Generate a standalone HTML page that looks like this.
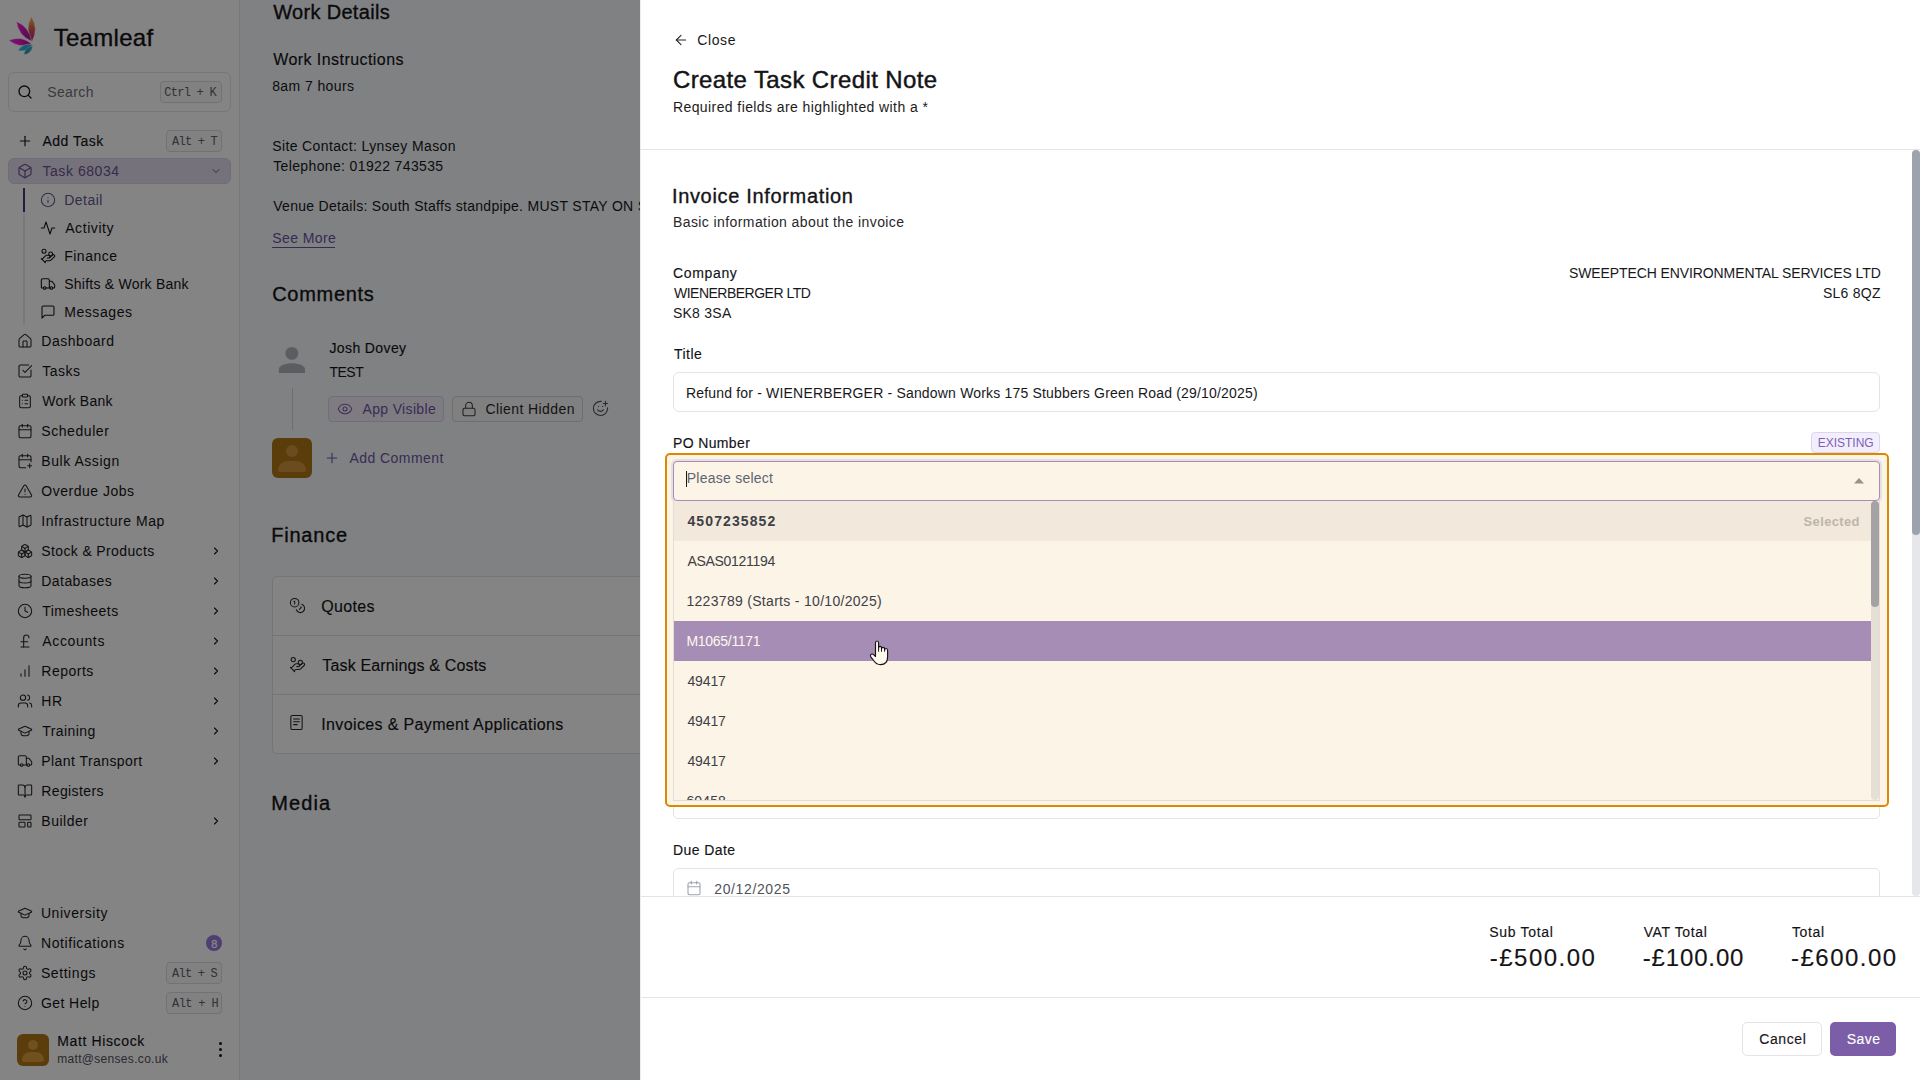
<!DOCTYPE html>
<html><head><meta charset="utf-8"><title>Create Task Credit Note</title>
<style>
html,body{margin:0;padding:0;width:1920px;height:1080px;overflow:hidden;background:#fff}
body{position:relative;font-family:"Liberation Sans", sans-serif;}
.abs{position:absolute;box-sizing:content-box}
.ic{position:absolute;overflow:visible}
.t{position:absolute;white-space:nowrap;}
</style></head><body>
<div class="abs" style="left:0;top:0;width:239px;height:1080px;background:#ffffff"></div><div class="abs" style="left:239px;top:0;width:1px;height:1080px;background:#e8e9ec"></div><div class="abs" style="left:240px;top:0;width:1680px;height:1080px;background:#f7f9fc"></div><svg class="abs" style="left:7px;top:14px;width:32px;height:44px" viewBox="0 0 32 44">
<defs>
<linearGradient id="g1" x1="0" y1="0" x2="0" y2="1"><stop offset="0" stop-color="#ffc44a"/><stop offset="0.45" stop-color="#e0604a"/><stop offset="1" stop-color="#b0247a"/></linearGradient>
<linearGradient id="g2" x1="0" y1="0" x2="1" y2="1"><stop offset="0" stop-color="#ff1ad8"/><stop offset="1" stop-color="#9a1890"/></linearGradient>
<linearGradient id="g3" x1="0" y1="0" x2="1" y2="0"><stop offset="0" stop-color="#ff22f0"/><stop offset="1" stop-color="#c0089a"/></linearGradient>
<linearGradient id="g4" x1="0" y1="0" x2="1" y2="0"><stop offset="0" stop-color="#22c8f0"/><stop offset="1" stop-color="#3a90d0"/></linearGradient>
<linearGradient id="g5" x1="0" y1="1" x2="1" y2="0"><stop offset="0" stop-color="#1a9a90"/><stop offset="1" stop-color="#40b0d8"/></linearGradient>
</defs>
<path d="M24.4 2.4 Q17.50 15.12 25 27.5 Q31.90 14.78 24.4 2.4Z" stroke="#ffffff" stroke-width="0.45" fill="url(#g1)"/>
<path d="M9.4 7.4 Q11.50 21.62 24.7 27.3 Q22.60 13.08 9.4 7.4Z" stroke="#ffffff" stroke-width="0.45" fill="url(#g2)"/>
<path d="M1.9 26.3 Q12.11 34.68 24.3 29.6 Q14.09 21.22 1.9 26.3Z" stroke="#ffffff" stroke-width="0.45" fill="url(#g3)"/>
<path d="M10.8 36.6 Q20.19 38.60 25.5 30.6 Q16.11 28.60 10.8 36.6Z" stroke="#ffffff" stroke-width="0.45" fill="url(#g4)"/>
<path d="M16.9 40.7 Q24.89 39.79 25.8 31.8 Q17.81 32.71 16.9 40.7Z" stroke="#ffffff" stroke-width="0.45" fill="url(#g5)"/>
</svg><div class="abs" style="left:8px;top:72px;width:221px;height:38px;border:1px solid #e4e4e7;border-radius:6px;background:#fff"></div><svg class="ic" style="left:17px;top:84px;width:16px;height:16px" viewBox="0 0 24 24" fill="none" stroke="#18181b" stroke-width="2" stroke-linecap="round" stroke-linejoin="round"><circle cx="11" cy="11" r="8"/><path d="m21 21-4.3-4.3"/></svg><div class="abs" style="left:160px;top:81px;width:60px;height:20px;border:1px solid #dcdce0;border-radius:4px;background:#fafafa"></div><svg class="ic" style="left:17px;top:133px;width:16px;height:16px" viewBox="0 0 24 24" fill="none" stroke="#18181b" stroke-width="1.8" stroke-linecap="round" stroke-linejoin="round"><path d="M5 12h14"/><path d="M12 5v14"/></svg><div class="abs" style="left:166px;top:130px;width:54px;height:20px;border:1px solid #dcdce0;border-radius:4px;background:#fafafa"></div><div class="abs" style="left:8px;top:158px;width:221px;height:24px;border:1px solid #d8d0ea;border-radius:6px;background:#e2dcef"></div><svg class="ic" style="left:17px;top:163px;width:16px;height:16px" viewBox="0 0 24 24" fill="none" stroke="#6a5690" stroke-width="1.8" stroke-linecap="round" stroke-linejoin="round"><path d="M21 8a2 2 0 0 0-1-1.73l-7-4a2 2 0 0 0-2 0l-7 4A2 2 0 0 0 3 8v8a2 2 0 0 0 1 1.73l7 4a2 2 0 0 0 2 0l7-4A2 2 0 0 0 21 16Z"/><path d="m3.3 7 8.7 5 8.7-5"/><path d="M12 22V12"/></svg><svg class="ic" style="left:210px;top:165px;width:12px;height:12px" viewBox="0 0 24 24" fill="none" stroke="#6a5690" stroke-width="2" stroke-linecap="round" stroke-linejoin="round"><path d="m6 9 6 6 6-6"/></svg><div class="abs" style="left:23px;top:188px;width:2px;height:136px;background:#e9e9ed"></div><div class="abs" style="left:23px;top:188px;width:2px;height:24px;background:#4a3878"></div><svg class="ic" style="left:40px;top:192px;width:16px;height:16px" viewBox="0 0 24 24" fill="none" stroke="#6a5690" stroke-width="1.6" stroke-linecap="round" stroke-linejoin="round"><circle cx="12" cy="12" r="10"/><path d="M12 16v-4"/><path d="M12 8h.01"/></svg><svg class="ic" style="left:40px;top:220px;width:16px;height:16px" viewBox="0 0 24 24" fill="none" stroke="#141417" stroke-width="1.6" stroke-linecap="round" stroke-linejoin="round"><path d="M22 12h-4l-3 9L9 3l-3 9H2"/></svg><svg class="ic" style="left:40px;top:248px;width:16px;height:16px" viewBox="0 0 24 24" fill="none" stroke="#141417" stroke-width="1.6" stroke-linecap="round" stroke-linejoin="round"><path d="M11 15h2a2 2 0 1 0 0-4h-3c-.6 0-1.1.2-1.4.6L3 17"/><path d="m7 21 1.6-1.4c.3-.4.8-.6 1.4-.6h4c1.1 0 2.1-.4 2.8-1.2l4.6-4.4a2 2 0 0 0-2.75-2.91l-4.2 3.9"/><path d="m2 16 6 6"/><circle cx="16" cy="9" r="2.9"/><circle cx="6" cy="5" r="3"/></svg><svg class="ic" style="left:40px;top:276px;width:16px;height:16px" viewBox="0 0 24 24" fill="none" stroke="#141417" stroke-width="1.6" stroke-linecap="round" stroke-linejoin="round"><path d="M14 18V6a2 2 0 0 0-2-2H4a2 2 0 0 0-2 2v11a1 1 0 0 0 1 1h2"/><path d="M15 18H9"/><path d="M19 18h2a1 1 0 0 0 1-1v-3.65a1 1 0 0 0-.22-.624l-3.48-4.35A1 1 0 0 0 17.52 8H14"/><circle cx="17" cy="18" r="2"/><circle cx="7" cy="18" r="2"/></svg><svg class="ic" style="left:40px;top:304px;width:16px;height:16px" viewBox="0 0 24 24" fill="none" stroke="#141417" stroke-width="1.6" stroke-linecap="round" stroke-linejoin="round"><path d="M21 15a2 2 0 0 1-2 2H7l-4 4V5a2 2 0 0 1 2-2h14a2 2 0 0 1 2 2z"/></svg><svg class="ic" style="left:17px;top:333px;width:16px;height:16px" viewBox="0 0 24 24" fill="none" stroke="#27272a" stroke-width="1.6" stroke-linecap="round" stroke-linejoin="round"><path d="M15 21v-8a1 1 0 0 0-1-1h-4a1 1 0 0 0-1 1v8"/><path d="M3 10a2 2 0 0 1 .709-1.528l7-5.999a2 2 0 0 1 2.582 0l7 5.999A2 2 0 0 1 21 10v9a2 2 0 0 1-2 2H5a2 2 0 0 1-2-2z"/></svg><svg class="ic" style="left:17px;top:363px;width:16px;height:16px" viewBox="0 0 24 24" fill="none" stroke="#27272a" stroke-width="1.6" stroke-linecap="round" stroke-linejoin="round"><path d="M21 10.5V19a2 2 0 0 1-2 2H5a2 2 0 0 1-2-2V5a2 2 0 0 1 2-2h12.5"/><path d="m9 11 3 3L22 4"/></svg><svg class="ic" style="left:17px;top:393px;width:16px;height:16px" viewBox="0 0 24 24" fill="none" stroke="#27272a" stroke-width="1.6" stroke-linecap="round" stroke-linejoin="round"><rect width="8" height="4" x="8" y="2" rx="1" ry="1"/><path d="M16 4h2a2 2 0 0 1 2 2v14a2 2 0 0 1-2 2H6a2 2 0 0 1-2-2V6a2 2 0 0 1 2-2h2"/><path d="M12 11h4"/><path d="M12 16h4"/><path d="M8 11h.01"/><path d="M8 16h.01"/></svg><svg class="ic" style="left:17px;top:423px;width:16px;height:16px" viewBox="0 0 24 24" fill="none" stroke="#27272a" stroke-width="1.6" stroke-linecap="round" stroke-linejoin="round"><path d="M8 2v4"/><path d="M16 2v4"/><rect width="18" height="18" x="3" y="4" rx="2"/><path d="M3 10h18"/></svg><svg class="ic" style="left:17px;top:453px;width:16px;height:16px" viewBox="0 0 24 24" fill="none" stroke="#27272a" stroke-width="1.6" stroke-linecap="round" stroke-linejoin="round"><path d="M8 2v4"/><path d="M16 2v4"/><path d="M21 13V6a2 2 0 0 0-2-2H5a2 2 0 0 0-2 2v14a2 2 0 0 0 2 2h8"/><path d="M3 10h18"/><path d="M16 19h6"/><path d="M19 16v6"/></svg><svg class="ic" style="left:17px;top:483px;width:16px;height:16px" viewBox="0 0 24 24" fill="none" stroke="#27272a" stroke-width="1.6" stroke-linecap="round" stroke-linejoin="round"><path d="m21.73 18-8-14a2 2 0 0 0-3.48 0l-8 14A2 2 0 0 0 4 21h16a2 2 0 0 0 1.73-3"/><path d="M12 9v4"/><path d="M12 17h.01"/></svg><svg class="ic" style="left:17px;top:513px;width:16px;height:16px" viewBox="0 0 24 24" fill="none" stroke="#27272a" stroke-width="1.6" stroke-linecap="round" stroke-linejoin="round"><path d="M14.106 5.553a2 2 0 0 0 1.788 0l3.659-1.83A1 1 0 0 1 21 4.619v12.764a1 1 0 0 1-.553.894l-4.553 2.277a2 2 0 0 1-1.788 0l-4.212-2.106a2 2 0 0 0-1.788 0l-3.659 1.83A1 1 0 0 1 3 19.381V6.618a1 1 0 0 1 .553-.894l4.553-2.277a2 2 0 0 1 1.788 0z"/><path d="M15 5.764v15"/><path d="M9 3.236v15"/></svg><svg class="ic" style="left:17px;top:543px;width:16px;height:16px" viewBox="0 0 24 24" fill="none" stroke="#27272a" stroke-width="1.6" stroke-linecap="round" stroke-linejoin="round"><path d="M2.97 12.92A2 2 0 0 0 2 14.63v3.24a2 2 0 0 0 .97 1.71l3 1.8a2 2 0 0 0 2.06 0L12 19v-5.5l-5-3-4.03 2.42Z"/><path d="m7 16.5-4.74-2.85"/><path d="m7 16.5 5-3"/><path d="M7 16.5v5.17"/><path d="M12 13.5V19l3.97 2.38a2 2 0 0 0 2.06 0l3-1.8a2 2 0 0 0 .97-1.71v-3.24a2 2 0 0 0-.97-1.71L17 10.5l-5 3Z"/><path d="m17 16.5-5-3"/><path d="m17 16.5 4.74-2.85"/><path d="M17 16.5v5.17"/><path d="M7.97 4.42A2 2 0 0 0 7 6.13v4.37l5 3 5-3V6.13a2 2 0 0 0-.97-1.71l-3-1.8a2 2 0 0 0-2.06 0l-3 1.8Z"/><path d="M12 8 7.26 5.15"/><path d="m12 8 4.74-2.85"/><path d="M12 13.5V8"/></svg><svg class="ic" style="left:210px;top:545px;width:12px;height:12px" viewBox="0 0 24 24" fill="none" stroke="#18181b" stroke-width="2.3" stroke-linecap="round" stroke-linejoin="round"><path d="m9 18 6-6-6-6"/></svg><svg class="ic" style="left:17px;top:573px;width:16px;height:16px" viewBox="0 0 24 24" fill="none" stroke="#27272a" stroke-width="1.6" stroke-linecap="round" stroke-linejoin="round"><ellipse cx="12" cy="5" rx="9" ry="3"/><path d="M3 5V19A9 3 0 0 0 21 19V5"/><path d="M3 12A9 3 0 0 0 21 12"/></svg><svg class="ic" style="left:210px;top:575px;width:12px;height:12px" viewBox="0 0 24 24" fill="none" stroke="#18181b" stroke-width="2.3" stroke-linecap="round" stroke-linejoin="round"><path d="m9 18 6-6-6-6"/></svg><svg class="ic" style="left:17px;top:603px;width:16px;height:16px" viewBox="0 0 24 24" fill="none" stroke="#27272a" stroke-width="1.6" stroke-linecap="round" stroke-linejoin="round"><circle cx="12" cy="12" r="10"/><polyline points="12 6 12 12 16 14"/></svg><svg class="ic" style="left:210px;top:605px;width:12px;height:12px" viewBox="0 0 24 24" fill="none" stroke="#18181b" stroke-width="2.3" stroke-linecap="round" stroke-linejoin="round"><path d="m9 18 6-6-6-6"/></svg><svg class="ic" style="left:17px;top:633px;width:16px;height:16px" viewBox="0 0 24 24" fill="none" stroke="#27272a" stroke-width="1.6" stroke-linecap="round" stroke-linejoin="round"><path d="M18 7c0-5.333-8-5.333-8 0"/><path d="M10 7v14"/><path d="M6 21h12"/><path d="M6 13h10"/></svg><svg class="ic" style="left:210px;top:635px;width:12px;height:12px" viewBox="0 0 24 24" fill="none" stroke="#18181b" stroke-width="2.3" stroke-linecap="round" stroke-linejoin="round"><path d="m9 18 6-6-6-6"/></svg><svg class="ic" style="left:17px;top:663px;width:16px;height:16px" viewBox="0 0 24 24" fill="none" stroke="#27272a" stroke-width="1.6" stroke-linecap="round" stroke-linejoin="round"><path d="M12 20V10"/><path d="M18 20V4"/><path d="M6 20v-4"/></svg><svg class="ic" style="left:210px;top:665px;width:12px;height:12px" viewBox="0 0 24 24" fill="none" stroke="#18181b" stroke-width="2.3" stroke-linecap="round" stroke-linejoin="round"><path d="m9 18 6-6-6-6"/></svg><svg class="ic" style="left:17px;top:693px;width:16px;height:16px" viewBox="0 0 24 24" fill="none" stroke="#27272a" stroke-width="1.6" stroke-linecap="round" stroke-linejoin="round"><path d="M16 21v-2a4 4 0 0 0-4-4H6a4 4 0 0 0-4 4v2"/><circle cx="9" cy="7" r="4"/><path d="M22 21v-2a4 4 0 0 0-3-3.87"/><path d="M16 3.13a4 4 0 0 1 0 7.75"/></svg><svg class="ic" style="left:210px;top:695px;width:12px;height:12px" viewBox="0 0 24 24" fill="none" stroke="#18181b" stroke-width="2.3" stroke-linecap="round" stroke-linejoin="round"><path d="m9 18 6-6-6-6"/></svg><svg class="ic" style="left:17px;top:723px;width:16px;height:16px" viewBox="0 0 24 24" fill="none" stroke="#27272a" stroke-width="1.6" stroke-linecap="round" stroke-linejoin="round"><path d="M21.42 10.922a1 1 0 0 0-.019-1.838L12.83 5.18a2 2 0 0 0-1.66 0L2.6 9.08a1 1 0 0 0 0 1.832l8.57 3.908a2 2 0 0 0 1.66 0z"/><path d="M6 12.5V16a6 3 0 0 0 12 0v-3.5"/></svg><svg class="ic" style="left:210px;top:725px;width:12px;height:12px" viewBox="0 0 24 24" fill="none" stroke="#18181b" stroke-width="2.3" stroke-linecap="round" stroke-linejoin="round"><path d="m9 18 6-6-6-6"/></svg><svg class="ic" style="left:17px;top:753px;width:16px;height:16px" viewBox="0 0 24 24" fill="none" stroke="#27272a" stroke-width="1.6" stroke-linecap="round" stroke-linejoin="round"><path d="M14 18V6a2 2 0 0 0-2-2H4a2 2 0 0 0-2 2v11a1 1 0 0 0 1 1h2"/><path d="M15 18H9"/><path d="M19 18h2a1 1 0 0 0 1-1v-3.65a1 1 0 0 0-.22-.624l-3.48-4.35A1 1 0 0 0 17.52 8H14"/><circle cx="17" cy="18" r="2"/><circle cx="7" cy="18" r="2"/></svg><svg class="ic" style="left:210px;top:755px;width:12px;height:12px" viewBox="0 0 24 24" fill="none" stroke="#18181b" stroke-width="2.3" stroke-linecap="round" stroke-linejoin="round"><path d="m9 18 6-6-6-6"/></svg><svg class="ic" style="left:17px;top:783px;width:16px;height:16px" viewBox="0 0 24 24" fill="none" stroke="#27272a" stroke-width="1.6" stroke-linecap="round" stroke-linejoin="round"><path d="M12 7v14"/><path d="M3 18a1 1 0 0 1-1-1V4a1 1 0 0 1 1-1h5a4 4 0 0 1 4 4 4 4 0 0 1 4-4h5a1 1 0 0 1 1 1v13a1 1 0 0 1-1 1h-6a3 3 0 0 0-3 3 3 3 0 0 0-3-3z"/></svg><svg class="ic" style="left:17px;top:813px;width:16px;height:16px" viewBox="0 0 24 24" fill="none" stroke="#27272a" stroke-width="1.6" stroke-linecap="round" stroke-linejoin="round"><rect width="18" height="7" x="3" y="3" rx="1"/><rect width="9" height="7" x="3" y="14" rx="1"/><rect width="5" height="7" x="16" y="14" rx="1"/></svg><svg class="ic" style="left:210px;top:815px;width:12px;height:12px" viewBox="0 0 24 24" fill="none" stroke="#18181b" stroke-width="2.3" stroke-linecap="round" stroke-linejoin="round"><path d="m9 18 6-6-6-6"/></svg><svg class="ic" style="left:17px;top:905px;width:16px;height:16px" viewBox="0 0 24 24" fill="none" stroke="#27272a" stroke-width="1.6" stroke-linecap="round" stroke-linejoin="round"><path d="M21.42 10.922a1 1 0 0 0-.019-1.838L12.83 5.18a2 2 0 0 0-1.66 0L2.6 9.08a1 1 0 0 0 0 1.832l8.57 3.908a2 2 0 0 0 1.66 0z"/><path d="M6 12.5V16a6 3 0 0 0 12 0v-3.5"/></svg><svg class="ic" style="left:17px;top:935px;width:16px;height:16px" viewBox="0 0 24 24" fill="none" stroke="#27272a" stroke-width="1.6" stroke-linecap="round" stroke-linejoin="round"><path d="M10.268 21a2 2 0 0 0 3.464 0"/><path d="M3.262 15.326A1 1 0 0 0 4 17h16a1 1 0 0 0 .74-1.673C19.41 13.956 18 12.499 18 8A6 6 0 0 0 6 8c0 4.499-1.411 5.956-2.738 7.326"/></svg><svg class="ic" style="left:17px;top:965px;width:16px;height:16px" viewBox="0 0 24 24" fill="none" stroke="#27272a" stroke-width="1.6" stroke-linecap="round" stroke-linejoin="round"><path d="M12.22 2h-.44a2 2 0 0 0-2 2v.18a2 2 0 0 1-1 1.73l-.43.25a2 2 0 0 1-2 0l-.15-.08a2 2 0 0 0-2.73.73l-.22.38a2 2 0 0 0 .73 2.73l.15.1a2 2 0 0 1 1 1.72v.51a2 2 0 0 1-1 1.74l-.15.09a2 2 0 0 0-.73 2.73l.22.38a2 2 0 0 0 2.73.73l.15-.08a2 2 0 0 1 2 0l.43.25a2 2 0 0 1 1 1.73V20a2 2 0 0 0 2 2h.44a2 2 0 0 0 2-2v-.18a2 2 0 0 1 1-1.73l.43-.25a2 2 0 0 1 2 0l.15.08a2 2 0 0 0 2.73-.73l.22-.39a2 2 0 0 0-.73-2.73l-.15-.08a2 2 0 0 1-1-1.74v-.5a2 2 0 0 1 1-1.74l.15-.09a2 2 0 0 0 .73-2.73l-.22-.38a2 2 0 0 0-2.73-.73l-.15.08a2 2 0 0 1-2 0l-.43-.25a2 2 0 0 1-1-1.73V4a2 2 0 0 0-2-2z"/><circle cx="12" cy="12" r="3"/></svg><svg class="ic" style="left:17px;top:995px;width:16px;height:16px" viewBox="0 0 24 24" fill="none" stroke="#27272a" stroke-width="1.6" stroke-linecap="round" stroke-linejoin="round"><circle cx="12" cy="12" r="10"/><path d="M9.09 9a3 3 0 0 1 5.83 1c0 2-3 3-3 3"/><path d="M12 17h.01"/></svg><div class="abs" style="left:206px;top:935px;width:16px;height:16px;border-radius:8px;background:#9a78dc"></div><div class="abs" style="left:166px;top:962px;width:54px;height:20px;border:1px solid #dcdce0;border-radius:4px;background:#fafafa"></div><div class="abs" style="left:166px;top:992px;width:54px;height:20px;border:1px solid #dcdce0;border-radius:4px;background:#fafafa"></div><div class="abs" style="left:17px;top:1034px;width:32px;height:32px;border-radius:6px;background:#b07416;overflow:hidden"><div class="abs" style="left:11px;top:6px;width:10px;height:10px;border-radius:5px;background:#d99a3a"></div><div class="abs" style="left:5px;top:18px;width:22px;height:10px;border-radius:11px 11px 3px 3px;background:#d99a3a"></div></div><div class="abs" style="left:219px;top:1042px;width:3px;height:3px;border-radius:2px;background:#18181b"></div><div class="abs" style="left:219px;top:1048px;width:3px;height:3px;border-radius:2px;background:#18181b"></div><div class="abs" style="left:219px;top:1054px;width:3px;height:3px;border-radius:2px;background:#18181b"></div><div class="abs" style="left:272px;top:247px;width:63px;height:1px;background:#6d51a6"></div><svg class="abs" style="left:270px;top:340px;width:40px;height:40px" viewBox="270 340 40 40"><circle cx="291.85" cy="353.35" r="6.45" fill="#b2b4bc"/><path d="M278.9 373 V369.2 C278.9 365.6 285.2 363.3 291.95 363.3 C298.7 363.3 305 365.6 305 369.2 V373 Z" fill="#b2b4bc"/></svg><div class="abs" style="left:292px;top:388px;width:1px;height:42px;background:#d4d4d8"></div><div class="abs" style="left:328px;top:396px;width:114px;height:24px;border:1px solid #ddd3f0;border-radius:4px;background:#f3effa"></div><svg class="ic" style="left:337px;top:401px;width:16px;height:16px" viewBox="0 0 24 24" fill="none" stroke="#7c62b0" stroke-width="1.6" stroke-linecap="round" stroke-linejoin="round"><path d="M2.062 12.348a1 1 0 0 1 0-.696 10.75 10.75 0 0 1 19.876 0 1 1 0 0 1 0 .696 10.75 10.75 0 0 1-19.876 0"/><circle cx="12" cy="12" r="3"/></svg><div class="abs" style="left:452px;top:396px;width:129px;height:24px;border:1px solid #d4d4d8;border-radius:4px;background:#f7f8fa"></div><svg class="ic" style="left:461px;top:401px;width:16px;height:16px" viewBox="0 0 24 24" fill="none" stroke="#3f3f46" stroke-width="1.6" stroke-linecap="round" stroke-linejoin="round"><rect width="18" height="11" x="3" y="11" rx="2" ry="2"/><path d="M7 11V7a5 5 0 0 1 10 0v4"/></svg><svg class="ic" style="left:592px;top:400px;width:17px;height:17px" viewBox="0 0 24 24" fill="none" stroke="#52525b" stroke-width="1.6" stroke-linecap="round" stroke-linejoin="round"><path d="M22 11v1a10 10 0 1 1-9-10"/><path d="M8 14s1.5 2 4 2 4-2 4-2"/><line x1="9" x2="9.01" y1="9" y2="9"/><line x1="15" x2="15.01" y1="9" y2="9"/><path d="M16 5h6"/><path d="M19 2v6"/></svg><div class="abs" style="left:272px;top:438px;width:40px;height:40px;border-radius:6px;background:#b07416;overflow:hidden"><div class="abs" style="left:14px;top:7px;width:12px;height:12px;border-radius:6px;background:#d0943a"></div><div class="abs" style="left:6px;top:23px;width:28px;height:11px;border-radius:14px 14px 3px 3px;background:#d0943a"></div></div><svg class="ic" style="left:324px;top:450px;width:16px;height:16px" viewBox="0 0 24 24" fill="none" stroke="#6f55a6" stroke-width="1.6" stroke-linecap="round" stroke-linejoin="round"><path d="M5 12h14"/><path d="M12 5v14"/></svg><div class="abs" style="left:272px;top:576px;width:500px;height:176px;border:1px solid #e2e3e7;border-radius:5px;background:#ffffff"></div><div class="abs" style="left:273px;top:635px;width:500px;height:1px;background:#e2e3e7"></div><div class="abs" style="left:273px;top:694px;width:500px;height:1px;background:#e2e3e7"></div><svg class="ic" style="left:288.5px;top:596.5px;width:17px;height:17px" viewBox="0 0 24 24" fill="none" stroke="#27272a" stroke-width="1.5" stroke-linecap="round" stroke-linejoin="round"><circle cx="8" cy="8" r="6"/><path d="M18.09 10.37A6 6 0 1 1 10.34 18"/><path d="M7 6h1v4"/><path d="m16.71 13.88.7.71-2.82 2.82"/></svg><svg class="ic" style="left:288.5px;top:656px;width:17px;height:17px" viewBox="0 0 24 24" fill="none" stroke="#27272a" stroke-width="1.5" stroke-linecap="round" stroke-linejoin="round"><path d="M11 15h2a2 2 0 1 0 0-4h-3c-.6 0-1.1.2-1.4.6L3 17"/><path d="m7 21 1.6-1.4c.3-.4.8-.6 1.4-.6h4c1.1 0 2.1-.4 2.8-1.2l4.6-4.4a2 2 0 0 0-2.75-2.91l-4.2 3.9"/><path d="m2 16 6 6"/><circle cx="16" cy="9" r="2.9"/><circle cx="6" cy="5" r="3"/></svg><svg class="ic" style="left:288.2px;top:714.3px;width:17px;height:17px" viewBox="0 0 24 24" fill="none" stroke="#27272a" stroke-width="1.5" stroke-linecap="round" stroke-linejoin="round"><rect width="16" height="20" x="4" y="2" rx="2"/><path d="M8 7h8"/><path d="M8 11h8"/><path d="M8 15h5"/></svg><div class="t" style="left:53.7px;top:26px;font-size:24px;line-height:24px;font-weight:400;color:#141417;letter-spacing:0.285px;-webkit-text-stroke:0.35px currentColor">Teamleaf</div><div class="t" style="left:47.2px;top:85px;font-size:14px;line-height:14px;font-weight:400;color:#71717a;letter-spacing:0.4px">Search</div><div class="t" style="left:164.2px;top:87px;font-size:12px;line-height:12px;font-weight:400;color:#606068;letter-spacing:-0.714px;font-family:'Liberation Mono', monospace;-webkit-text-stroke:0px currentColor">Ctrl + K</div><div class="t" style="left:42.45px;top:134px;font-size:14px;line-height:14px;font-weight:400;color:#141417;letter-spacing:0.5px;-webkit-text-stroke:0.15px currentColor">Add Task</div><div class="t" style="left:172.1px;top:136px;font-size:12px;line-height:12px;font-weight:400;color:#606068;letter-spacing:-0.8px;font-family:'Liberation Mono', monospace;-webkit-text-stroke:0px currentColor">Alt + T</div><div class="t" style="left:42.45px;top:164px;font-size:14px;line-height:14px;font-weight:400;color:#6a5690;letter-spacing:0.555px">Task 68034</div><div class="t" style="left:64.2px;top:193px;font-size:14px;line-height:14px;font-weight:400;color:#6a5690;letter-spacing:0.5px">Detail</div><div class="t" style="left:65.2px;top:221px;font-size:14px;line-height:14px;font-weight:400;color:#141417;letter-spacing:0.572px">Activity</div><div class="t" style="left:64.2px;top:249px;font-size:14px;line-height:14px;font-weight:400;color:#141417;letter-spacing:0.5px">Finance</div><div class="t" style="left:64.2px;top:277px;font-size:14px;line-height:14px;font-weight:400;color:#141417;letter-spacing:0.236px">Shifts &amp; Work Bank</div><div class="t" style="left:64.2px;top:305px;font-size:14px;line-height:14px;font-weight:400;color:#141417;letter-spacing:0.571px">Messages</div><div class="t" style="left:41.3px;top:334px;font-size:14px;line-height:14px;font-weight:400;color:#141417;letter-spacing:0.525px">Dashboard</div><div class="t" style="left:42.3px;top:364px;font-size:14px;line-height:14px;font-weight:400;color:#141417;letter-spacing:0.5px">Tasks</div><div class="t" style="left:42.3px;top:394px;font-size:14px;line-height:14px;font-weight:400;color:#141417;letter-spacing:0.25px">Work Bank</div><div class="t" style="left:41.3px;top:424px;font-size:14px;line-height:14px;font-weight:400;color:#141417;letter-spacing:0.562px">Scheduler</div><div class="t" style="left:41.3px;top:454px;font-size:14px;line-height:14px;font-weight:400;color:#141417;letter-spacing:0.55px">Bulk Assign</div><div class="t" style="left:41.3px;top:484px;font-size:14px;line-height:14px;font-weight:400;color:#141417;letter-spacing:0.5px">Overdue Jobs</div><div class="t" style="left:41.3px;top:514px;font-size:14px;line-height:14px;font-weight:400;color:#141417;letter-spacing:0.559px">Infrastructure Map</div><div class="t" style="left:41.3px;top:544px;font-size:14px;line-height:14px;font-weight:400;color:#141417;letter-spacing:0.366px">Stock &amp; Products</div><div class="t" style="left:41.3px;top:574px;font-size:14px;line-height:14px;font-weight:400;color:#141417;letter-spacing:0.438px">Databases</div><div class="t" style="left:42.3px;top:604px;font-size:14px;line-height:14px;font-weight:400;color:#141417;letter-spacing:0.444px">Timesheets</div><div class="t" style="left:42.3px;top:634px;font-size:14px;line-height:14px;font-weight:400;color:#141417;letter-spacing:0.643px">Accounts</div><div class="t" style="left:41.3px;top:664px;font-size:14px;line-height:14px;font-weight:400;color:#141417;letter-spacing:0.5px">Reports</div><div class="t" style="left:41.3px;top:694px;font-size:14px;line-height:14px;font-weight:400;color:#141417;letter-spacing:0.5px">HR</div><div class="t" style="left:42.3px;top:724px;font-size:14px;line-height:14px;font-weight:400;color:#141417;letter-spacing:0.429px">Training</div><div class="t" style="left:41.3px;top:754px;font-size:14px;line-height:14px;font-weight:400;color:#141417;letter-spacing:0.429px">Plant Transport</div><div class="t" style="left:41.3px;top:784px;font-size:14px;line-height:14px;font-weight:400;color:#141417;letter-spacing:0.374px">Registers</div><div class="t" style="left:41.3px;top:814px;font-size:14px;line-height:14px;font-weight:400;color:#141417;letter-spacing:0.5px">Builder</div><div class="t" style="left:40.95px;top:906px;font-size:14px;line-height:14px;font-weight:400;color:#141417;letter-spacing:0.556px">University</div><div class="t" style="left:40.95px;top:936px;font-size:14px;line-height:14px;font-weight:400;color:#141417;letter-spacing:0.583px">Notifications</div><div class="t" style="left:40.95px;top:966px;font-size:14px;line-height:14px;font-weight:400;color:#141417;letter-spacing:0.571px">Settings</div><div class="t" style="left:40.95px;top:996px;font-size:14px;line-height:14px;font-weight:400;color:#141417;letter-spacing:0.429px">Get Help</div><div class="t" style="left:211.2px;top:939px;font-size:11px;line-height:11px;font-weight:400;color:#ffffff;letter-spacing:0px;-webkit-text-stroke:0.3px currentColor">8</div><div class="t" style="left:172.1px;top:968px;font-size:12px;line-height:12px;font-weight:400;color:#606068;letter-spacing:-0.8px;font-family:'Liberation Mono', monospace;-webkit-text-stroke:0px currentColor">Alt + S</div><div class="t" style="left:172.1px;top:998px;font-size:12px;line-height:12px;font-weight:400;color:#606068;letter-spacing:-0.633px;font-family:'Liberation Mono', monospace;-webkit-text-stroke:0px currentColor">Alt + H</div><div class="t" style="left:57.2px;top:1034px;font-size:14px;line-height:14px;font-weight:400;color:#141417;letter-spacing:0.636px;-webkit-text-stroke:0.15px currentColor">Matt Hiscock</div><div class="t" style="left:57.2px;top:1053px;font-size:12px;line-height:12px;font-weight:400;color:#52525b;letter-spacing:0.313px">matt@senses.co.uk</div><div class="t" style="left:273.2px;top:2px;font-size:20px;line-height:20px;font-weight:400;color:#141417;letter-spacing:0.318px;-webkit-text-stroke:0.35px currentColor">Work Details</div><div class="t" style="left:273.2px;top:52px;font-size:16px;line-height:16px;font-weight:400;color:#141417;letter-spacing:0.438px;-webkit-text-stroke:0.15px currentColor">Work Instructions</div><div class="t" style="left:272.2px;top:79px;font-size:14px;line-height:14px;font-weight:400;color:#18181b;letter-spacing:0.4px">8am 7 hours</div><div class="t" style="left:272.2px;top:139px;font-size:14px;line-height:14px;font-weight:400;color:#18181b;letter-spacing:0.38px">Site Contact: Lynsey Mason</div><div class="t" style="left:273.2px;top:159px;font-size:14px;line-height:14px;font-weight:400;color:#18181b;letter-spacing:0.364px">Telephone: 01922 743535</div><div class="t" style="left:273.2px;top:199px;font-size:14px;line-height:14px;font-weight:400;color:#18181b;letter-spacing:0.3px">Venue Details: South Staffs standpipe. MUST STAY ON SITE</div><div class="t" style="left:272.2px;top:231px;font-size:14px;line-height:14px;font-weight:400;color:#6d51a6;letter-spacing:0.429px">See More</div><div class="t" style="left:272.2px;top:284px;font-size:20px;line-height:20px;font-weight:400;color:#141417;letter-spacing:0.714px;-webkit-text-stroke:0.35px currentColor">Comments</div><div class="t" style="left:329.45px;top:341px;font-size:14px;line-height:14px;font-weight:400;color:#141417;letter-spacing:0.389px;-webkit-text-stroke:0.15px currentColor">Josh Dovey</div><div class="t" style="left:329.45px;top:365px;font-size:14px;line-height:14px;font-weight:400;color:#141417;letter-spacing:-0.5px">TEST</div><div class="t" style="left:362.45px;top:402px;font-size:14px;line-height:14px;font-weight:400;color:#6f55a6;letter-spacing:0.35px">App Visible</div><div class="t" style="left:485.45px;top:402px;font-size:14px;line-height:14px;font-weight:400;color:#27272a;letter-spacing:0.416px">Client Hidden</div><div class="t" style="left:349.45px;top:451px;font-size:14px;line-height:14px;font-weight:400;color:#6f55a6;letter-spacing:0.45px">Add Comment</div><div class="t" style="left:271.2px;top:525px;font-size:20px;line-height:20px;font-weight:400;color:#141417;letter-spacing:0.8px;-webkit-text-stroke:0.35px currentColor">Finance</div><div class="t" style="left:321.3px;top:599px;font-size:16px;line-height:16px;font-weight:400;color:#141417;letter-spacing:0.32px;-webkit-text-stroke:0.15px currentColor">Quotes</div><div class="t" style="left:322.3px;top:658px;font-size:16px;line-height:16px;font-weight:400;color:#141417;letter-spacing:0.15px;-webkit-text-stroke:0.15px currentColor">Task Earnings &amp; Costs</div><div class="t" style="left:321.3px;top:717px;font-size:16px;line-height:16px;font-weight:400;color:#141417;letter-spacing:0.36px;-webkit-text-stroke:0.15px currentColor">Invoices &amp; Payment Applications</div><div class="t" style="left:271.2px;top:793px;font-size:20px;line-height:20px;font-weight:400;color:#141417;letter-spacing:1.1px;-webkit-text-stroke:0.35px currentColor">Media</div>
<div class="abs" style="left:0;top:0;width:1920px;height:1080px;background:rgba(0,0,0,0.482)"></div>
<div class="abs" style="left:640px;top:0;width:1280px;height:1080px;background:#ffffff"></div><div class="abs" style="left:640px;top:0;width:1px;height:1080px;background:#ececef"></div><svg class="ic" style="left:673px;top:32px;width:16px;height:16px" viewBox="0 0 24 24" fill="none" stroke="#27272a" stroke-width="1.6" stroke-linecap="round" stroke-linejoin="round"><path d="m12 19-7-7 7-7"/><path d="M19 12H5"/></svg><div class="abs" style="left:640px;top:149px;width:1280px;height:1px;background:#e4e4e7"></div><div class="abs" style="left:1912px;top:150px;width:8px;height:746px;border-radius:4px;background:#e5e7eb"></div><div class="abs" style="left:1912px;top:150px;width:8px;height:385px;border-radius:4px;background:#9ca3af"></div><div class="abs" style="left:673px;top:372px;width:1205px;height:38px;border:1px solid #e4e4e7;border-radius:6px;background:#fff"></div><div class="abs" style="left:1811px;top:432px;width:67px;height:19px;border:1px solid #ddd3f5;border-radius:4px;background:#f2eefc"></div><div class="abs" style="left:673px;top:779px;width:1205px;height:38px;border:1px solid #e4e4e7;border-radius:5px;background:#fff"></div><div class="abs" style="left:665px;top:453px;width:1220px;height:350px;border:2px solid #dc8900;border-radius:5px;background:#fcf4e7"></div><div class="abs" style="left:671px;top:459px;width:1211px;height:44px;border-radius:6px;background:#e8e0df"></div><div class="abs" style="left:673px;top:461px;width:1205px;height:38px;border:1px solid #a78bb9;border-radius:4px;background:#fcf4e7"></div><div class="abs" style="left:686px;top:471px;width:1px;height:16px;background:#18181b"></div><svg class="abs" style="left:1853px;top:477px;width:12px;height:7px" viewBox="0 0 12 7"><path d="M1 6.5 L6 1 L11 6.5Z" fill="#9b9387"/></svg><div class="abs" style="left:673px;top:501px;width:1205px;height:299px;border:1px solid #e3ddd4;border-top:none;background:#fcf4e7;overflow:hidden"><div class="abs" style="left:0;top:0;width:1197px;height:40px;background:#f2e9dc"></div><div class="abs" style="left:0;top:120px;width:1197px;height:40px;background:#a68db5"></div><div class="abs" style="left:1197px;top:0;width:8px;height:299px;border-radius:4px;background:#e6dfd5"></div><div class="abs" style="left:1197px;top:0;width:8px;height:106px;border-radius:4px;background:#a3a3a3"></div></div><div class="abs" style="left:673px;top:868px;width:1205px;height:38px;border:1px solid #e4e4e7;border-radius:5px;background:#fff"></div><svg class="ic" style="left:686px;top:880px;width:16px;height:16px" viewBox="0 0 24 24" fill="none" stroke="#9ca3af" stroke-width="1.6" stroke-linecap="round" stroke-linejoin="round"><path d="M8 2v4"/><path d="M16 2v4"/><rect width="18" height="18" x="3" y="4" rx="2"/><path d="M3 10h18"/></svg><div class="abs" style="left:641px;top:896px;width:1279px;height:184px;background:#fff"></div><div class="abs" style="left:641px;top:896px;width:1279px;height:1px;background:#e4e4e7"></div><div class="abs" style="left:641px;top:997px;width:1279px;height:1px;background:#e4e4e7"></div><div class="abs" style="left:1742px;top:1022px;width:78px;height:32px;border:1px solid #e4e4e7;border-radius:5px;background:#fff"></div><div class="abs" style="left:1830px;top:1022px;width:66px;height:34px;border-radius:5px;background:#7b5ea7"></div><div class="t" style="left:697.2px;top:33px;font-size:14px;line-height:14px;font-weight:400;color:#18181b;letter-spacing:0.626px">Close</div><div class="t" style="left:672.95px;top:68px;font-size:24px;line-height:24px;font-weight:400;color:#141417;letter-spacing:0.386px;-webkit-text-stroke:0.45px currentColor">Create Task Credit Note</div><div class="t" style="left:672.95px;top:100px;font-size:14px;line-height:14px;font-weight:400;color:#1c1c20;letter-spacing:0.41px">Required fields are highlighted with a *</div><div class="t" style="left:671.95px;top:186px;font-size:20px;line-height:20px;font-weight:400;color:#141417;letter-spacing:0.667px;-webkit-text-stroke:0.35px currentColor">Invoice Information</div><div class="t" style="left:672.95px;top:215px;font-size:14px;line-height:14px;font-weight:400;color:#27272a;letter-spacing:0.412px">Basic information about the invoice</div><div class="t" style="left:672.95px;top:266px;font-size:14px;line-height:14px;font-weight:400;color:#141417;letter-spacing:0.667px;-webkit-text-stroke:0.15px currentColor">Company</div><div class="t" style="left:673.95px;top:286px;font-size:14px;line-height:14px;font-weight:400;color:#18181b;letter-spacing:-0.5px">WIENERBERGER LTD</div><div class="t" style="left:672.95px;top:306px;font-size:14px;line-height:14px;font-weight:400;color:#18181b;letter-spacing:0.25px">SK8 3SA</div><div class="t" style="left:1568.95px;top:266px;font-size:14px;line-height:14px;font-weight:400;color:#18181b;letter-spacing:-0.1px">SWEEPTECH ENVIRONMENTAL SERVICES LTD</div><div class="t" style="left:1822.95px;top:286px;font-size:14px;line-height:14px;font-weight:400;color:#18181b;letter-spacing:0.25px">SL6 8QZ</div><div class="t" style="left:673.95px;top:347px;font-size:14px;line-height:14px;font-weight:400;color:#141417;letter-spacing:0.5px;-webkit-text-stroke:0.15px currentColor">Title</div><div class="t" style="left:685.95px;top:386px;font-size:14px;line-height:14px;font-weight:400;color:#18181b;letter-spacing:0.182px">Refund for - WIENERBERGER - Sandown Works 175 Stubbers Green Road (29/10/2025)</div><div class="t" style="left:672.95px;top:436px;font-size:14px;line-height:14px;font-weight:400;color:#141417;letter-spacing:0.375px;-webkit-text-stroke:0.15px currentColor">PO Number</div><div class="t" style="left:1817.7px;top:437px;font-size:12px;line-height:12px;font-weight:400;color:#7e5fb8;letter-spacing:-0.0px">EXISTING</div><div class="t" style="left:686.7px;top:471px;font-size:14px;line-height:14px;font-weight:400;color:#5c6570;letter-spacing:0.25px">Please select</div><div class="t" style="left:687.45px;top:514px;font-size:14px;line-height:14px;font-weight:700;color:#3f3f46;letter-spacing:1.111px">4507235852</div><div class="t" style="left:687.45px;top:554px;font-size:14px;line-height:14px;font-weight:400;color:#3f3f46;letter-spacing:-0.3px">ASAS0121194</div><div class="t" style="left:686.45px;top:594px;font-size:14px;line-height:14px;font-weight:400;color:#3f3f46;letter-spacing:0.303px">1223789 (Starts - 10/10/2025)</div><div class="t" style="left:686.45px;top:634px;font-size:14px;line-height:14px;font-weight:400;color:#fdf8ef;letter-spacing:-0.289px">M1065/1171</div><div class="t" style="left:687.45px;top:674px;font-size:14px;line-height:14px;font-weight:400;color:#3f3f46;letter-spacing:-0.126px">49417</div><div class="t" style="left:687.45px;top:714px;font-size:14px;line-height:14px;font-weight:400;color:#3f3f46;letter-spacing:-0.126px">49417</div><div class="t" style="left:687.45px;top:754px;font-size:14px;line-height:14px;font-weight:400;color:#3f3f46;letter-spacing:-0.126px">49417</div><div class="t" style="left:1803.6px;top:515px;font-size:13px;line-height:13px;font-weight:700;color:#bdb5aa;letter-spacing:0.343px">Selected</div><div class="abs" style="left:673px;top:501px;width:1197px;height:299px;overflow:hidden"><div class="t" style="left:13.45px;top:293px;font-size:14px;line-height:14px;font-weight:400;color:#3f3f46;letter-spacing:0.124px">60458</div></div><div class="t" style="left:672.95px;top:843px;font-size:14px;line-height:14px;font-weight:400;color:#141417;letter-spacing:0.428px;-webkit-text-stroke:0.15px currentColor">Due Date</div><div class="t" style="left:714.3px;top:882px;font-size:14px;line-height:14px;font-weight:400;color:#52525b;letter-spacing:0.622px">20/12/2025</div><div class="t" style="left:1489.2px;top:925px;font-size:14px;line-height:14px;font-weight:400;color:#141417;letter-spacing:0.688px;-webkit-text-stroke:0.15px currentColor">Sub Total</div><div class="t" style="left:1489.7px;top:946px;font-size:24px;line-height:24px;font-weight:400;color:#141417;letter-spacing:1.5px;-webkit-text-stroke:0.15px currentColor">-£500.00</div><div class="t" style="left:1643.7px;top:925px;font-size:14px;line-height:14px;font-weight:400;color:#141417;letter-spacing:0.625px;-webkit-text-stroke:0.15px currentColor">VAT Total</div><div class="t" style="left:1642.7px;top:946px;font-size:24px;line-height:24px;font-weight:400;color:#141417;letter-spacing:0.857px;-webkit-text-stroke:0.15px currentColor">-£100.00</div><div class="t" style="left:1791.95px;top:925px;font-size:14px;line-height:14px;font-weight:400;color:#141417;letter-spacing:0.624px;-webkit-text-stroke:0.15px currentColor">Total</div><div class="t" style="left:1790.95px;top:946px;font-size:24px;line-height:24px;font-weight:400;color:#141417;letter-spacing:1.5px;-webkit-text-stroke:0.15px currentColor">-£600.00</div><div class="t" style="left:1759.2px;top:1032px;font-size:14px;line-height:14px;font-weight:400;color:#18181b;letter-spacing:0.6px;-webkit-text-stroke:0.15px currentColor">Cancel</div><div class="t" style="left:1846.7px;top:1032px;font-size:14px;line-height:14px;font-weight:400;color:#ffffff;letter-spacing:0.5px;-webkit-text-stroke:0.15px currentColor">Save</div>
<svg class="abs" style="left:860px;top:630px;width:40px;height:45px" viewBox="860 630 40 45">
<path d="M875.5 656 V643 Q875.5 641 877.05 641 Q878.6 641 878.6 643 V648 Q878.6 646.3 880.05 646.3 Q881.5 646.3 881.5 648 V649 Q881.5 647.3 883.05 647.3 Q884.6 647.3 884.6 649 V650 Q884.6 648.5 886.1 648.5 Q887.6 648.5 887.6 650.5 V657 Q887.6 664.6 880.5 664.6 Q876.5 664.6 874 661 L870.8 656.8 Q869.8 655.2 871.2 654.3 Q872.5 653.6 873.6 654.7 L875.5 656.5 Z" fill="#fdf7ec" stroke="#141414" stroke-width="1.15" stroke-linejoin="round"/>
<path d="M878.6 647.5 V651.7 M881.5 648.5 V651.7 M884.6 649.5 V651.7" stroke="#141414" stroke-width="1"/>
</svg>
</body></html>
